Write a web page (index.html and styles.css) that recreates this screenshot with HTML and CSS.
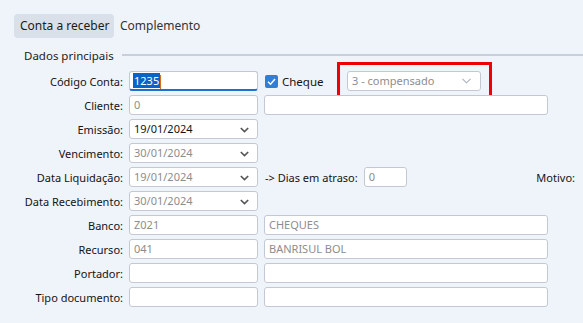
FILE: index.html
```html
<!DOCTYPE html>
<html lang="pt-BR">
<head>
    <meta charset="UTF-8">
    <title>Conta a receber</title>
    <link rel="stylesheet" href="styles.css">
</head>
<body>
    <div class="tabs">
        <div class="tab active">Conta a receber</div>
        <div class="tab">Complemento</div>
    </div>

    <div class="group">
        <div class="group-title"><span>Dados principais</span><div class="rule"></div></div>

        <div class="form">
            <label class="lbl">Código Conta:</label>
            <div class="field focused"><span class="sel">1235</span><span class="caret"></span></div>
            <div class="extra">
                <span class="check">
                    <svg width="13" height="13" viewBox="0 0 13 13"><rect width="13" height="13" rx="2" fill="#2f7fd6"/><polyline points="3,6.8 5.5,9.2 10,4" fill="none" stroke="#fff" stroke-width="1.5"/></svg>
                    Cheque
                </span>
                <div class="mark">
                    <div class="field combo status">3 - compensado
                        <svg class="chev" width="9" height="6" viewBox="0 0 9 6"><polyline points="0.5,0.8 4.5,4.8 8.5,0.8" fill="none" stroke="#a9b0bb" stroke-width="1.1"/></svg>
                    </div>
                </div>
            </div>

            <label class="lbl">Cliente:</label>
            <div class="field off">0</div>
            <div class="extra"><div class="field wide"></div></div>

            <label class="lbl">Emissão:</label>
            <div class="field combo">19/01/2024
                <svg class="chev" width="9" height="6" viewBox="0 0 9 6"><polyline points="0.8,1 4.5,4.6 8.2,1" fill="none" stroke="#555" stroke-width="1.6"/></svg>
            </div>
            <div></div>

            <label class="lbl">Vencimento:</label>
            <div class="field combo off">30/01/2024
                <svg class="chev" width="9" height="6" viewBox="0 0 9 6"><polyline points="0.8,1 4.5,4.6 8.2,1" fill="none" stroke="#555" stroke-width="1.6"/></svg>
            </div>
            <div></div>

            <label class="lbl">Data Liquidação:</label>
            <div class="field combo off">19/01/2024
                <svg class="chev" width="9" height="6" viewBox="0 0 9 6"><polyline points="0.8,1 4.5,4.6 8.2,1" fill="none" stroke="#555" stroke-width="1.6"/></svg>
            </div>
            <div class="extra">
                <span class="txt">-&gt; Dias em atraso:</span>
                <div class="field off small">0</div>
                <span class="txt motivo">Motivo:</span>
            </div>

            <label class="lbl">Data Recebimento:</label>
            <div class="field combo off">30/01/2024
                <svg class="chev" width="9" height="6" viewBox="0 0 9 6"><polyline points="0.8,1 4.5,4.6 8.2,1" fill="none" stroke="#555" stroke-width="1.6"/></svg>
            </div>
            <div></div>

            <label class="lbl">Banco:</label>
            <div class="field off">Z021</div>
            <div class="extra"><div class="field wide off">CHEQUES</div></div>

            <label class="lbl">Recurso:</label>
            <div class="field off">041</div>
            <div class="extra"><div class="field wide off">BANRISUL BOL</div></div>

            <label class="lbl">Portador:</label>
            <div class="field"></div>
            <div class="extra"><div class="field wide"></div></div>

            <label class="lbl">Tipo documento:</label>
            <div class="field"></div>
            <div class="extra"><div class="field wide"></div></div>
        </div>

        <div class="group-title next"><span>Valores</span></div>
    </div>
</body>
</html>
```

FILE: styles.css
```css
body {
    margin: 0;
    height: 323px;
    background: #eff3fa;
    font-family: "Noto Sans", "Open Sans", sans-serif;
    font-size: 11px;
    color: #141414;
    overflow: hidden;
}

.tabs {
    display: flex;
    align-items: center;
    padding: 14px 0 0 14px;
}
.tab {
    height: 24px;
    line-height: 24px;
    padding: 0 6px;
    font-size: 12px;
    color: #333;
    white-space: nowrap;
}
.tab.active {
    width: 88px;
    background: #d9e0e9;
    border-radius: 4px;
    color: #1b1b1b;
}

.group {
    padding-top: 8px;
}
.group-title {
    display: flex;
    align-items: center;
    height: 18px;
    padding-left: 24px;
    font-size: 11.5px;
    color: #222;
}
.group-title .rule {
    flex: 1;
    height: 2px;
    background: #c8cfd9;
    margin-left: 8px;
    margin-top: -1px;
}
.group-title.next {
    margin-top: 12px;
}

.form {
    display: grid;
    grid-template-columns: 123px 129px 1fr;
    column-gap: 6px;
    grid-auto-rows: 24px;
    align-items: center;
    margin-top: 5px;
}
.lbl {
    text-align: right;
    white-space: nowrap;
}
.field {
    position: relative;
    box-sizing: border-box;
    height: 20px;
    line-height: 18px;
    background: #fff;
    border: 1px solid #c3c9d3;
    border-radius: 3px;
    padding: 0 4px;
    color: #141414;
    white-space: nowrap;
}
.field.off {
    color: #8d8d8d;
}
.field.focused {
    border-bottom: 2px solid #1f6fce;
    padding-left: 3px;
}
.sel {
    background: #0a63c7;
    color: #fff;
    padding: 0 1px;
}
.caret {
    display: inline-block;
    width: 1px;
    height: 14px;
    vertical-align: middle;
    background: #e06b12;
}
.combo .chev {
    position: absolute;
    right: 8px;
    top: 7px;
}

.extra {
    display: flex;
    align-items: center;
    height: 24px;
}
.wide {
    width: 284px;
}
.check {
    display: flex;
    align-items: center;
    gap: 4px;
    width: 72px;
    margin-left: 1px;
    font-size: 11.5px;
}
.check svg {
    flex: none;
}
.mark {
    position: relative;
    margin-left: 10px;
}
.mark::before {
    content: "";
    position: absolute;
    left: -10px;
    top: -9px;
    width: 155px;
    height: 36px;
    box-sizing: border-box;
    border: 3px solid #ee0000;
}
.status {
    width: 134px;
    color: #8d8d8d;
}
.status .chev {
    top: 6px;
    right: 9px;
}
.txt {
    white-space: nowrap;
    margin-left: 1px;
}
.small {
    width: 43px;
    margin-left: 6px;
}
.motivo {
    margin-left: auto;
    margin-right: 8px;
}
```
